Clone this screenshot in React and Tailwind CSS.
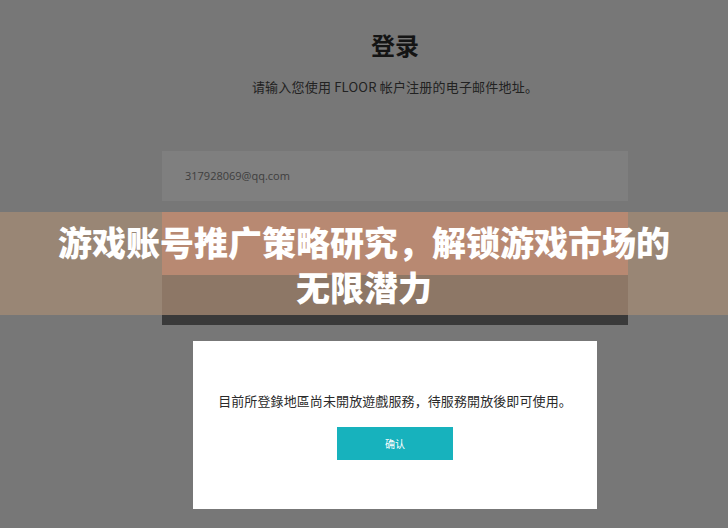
import React from 'react';

const cjk = { fontFamily: '"Noto Sans CJK SC", "Noto Sans", sans-serif' };

export default function App() {
  return (
    <div className="relative w-[728px] h-[528px] overflow-hidden bg-[#777777]" style={cjk}>
      {/* dimmed login page */}
      <div className="ml-[162px] w-[466px] flex flex-col items-center">
        <h1 className="mt-[28px] text-[24px] leading-[34px] font-semibold text-[#141414]">登录</h1>
        <p className="mt-[15px] text-[13px] leading-[20px] text-[#222222] tracking-[0.2px]">
          请输入您使用 FLOOR 帐户注册的电子邮件地址。
        </p>
        <div className="mt-[54px] w-full h-[50px] bg-[#7f7f7f] flex items-center px-[23px]">
          <span className="text-[11px] text-[#3e3e3e]" style={{ fontFamily: '"Open Sans", sans-serif' }}>
            317928069@qq.com
          </span>
        </div>
        <div className="mt-[11px] w-full h-[63px] bg-[#c27e6e]" />
        <div className="w-full h-[50px] bg-[#575252] border-b-[10px] border-[#3a3a3a]" />

        {/* alert dialog */}
        <div className="mt-[16px] w-[404px] h-[168px] bg-white flex flex-col items-center">
          <p className="mt-[50px] text-[13px] leading-[20px] text-[#2a2a2a] tracking-[0.1px]">
            目前所登錄地區尚未開放遊戲服務，待服務開放後即可使用。
          </p>
          <button className="mt-[16px] w-[116px] h-[33px] bg-[#17b2bd] text-white text-[10px]">
            确认
          </button>
        </div>
      </div>

      {/* headline banner */}
      <div className="absolute left-0 top-[212px] w-full h-[103px] bg-[#b1917599] flex flex-col items-center justify-center">
        <p className="text-[34px] leading-[45px] font-black text-white text-center">游戏账号推广策略研究，解锁游戏市场的</p>
        <p className="text-[34px] leading-[45px] font-black text-white text-center">无限潜力</p>
      </div>
    </div>
  );
}
